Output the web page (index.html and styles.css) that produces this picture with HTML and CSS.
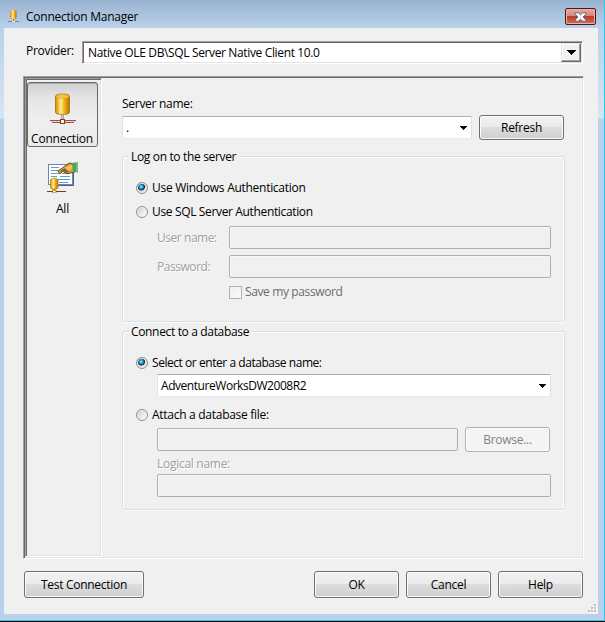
FILE: index.html
```html
<!DOCTYPE html>
<html lang="en">
<head>
<meta charset="utf-8">
<title>Connection Manager</title>
<link rel="stylesheet" href="styles.css">
</head>
<body>
<svg width="0" height="0" class="defs" aria-hidden="true">
  <defs>
    <linearGradient id="gold">
      <stop offset="0" stop-color="#c98a10"/><stop offset=".15" stop-color="#f0b020"/>
      <stop offset=".38" stop-color="#fff0a0"/><stop offset=".6" stop-color="#f8b81c"/><stop offset="1" stop-color="#b87300"/>
    </linearGradient>
    <symbol id="arrow" viewBox="0 0 9 5"><path d="M0 0H9V1H8V2H7V3H6V4H5V5H4V4H3V3H2V2H1V1H0Z" shape-rendering="crispEdges"/></symbol>
    <symbol id="small-arrow" viewBox="0 0 7 4"><path d="M0 0H7V1H6V2H5V3H4V4H3V3H2V2H1V1H0Z" shape-rendering="crispEdges"/></symbol>
  </defs>
</svg>
<div class="window">
  <header class="titlebar">
    <svg class="title-icon" width="12" height="14" viewBox="0 0 12 14">
      <rect x="2.5" y="1" width="6" height="9" rx="1.5" fill="url(#gold)"/>
      <path d="M5.5 10v2" stroke="#777"/><path d="M0 12.5h4M7 12.5h4" stroke="#c06a62"/><path d="M4.5 12.5h2" stroke="#fff"/>
    </svg>
    <h1>Connection Manager</h1>
    <button class="close" aria-label="Close">
      <svg width="13" height="10" viewBox="0 0 13 10"><path d="M1 .8h3.4l2.1 2 2.1-2H12v1.3L9 5l3 2.9v1.3H8.600l-2.100-2-2.100 2H1V7.900L4 5 1 2.100Z" fill="#f7f7f7" stroke="#59607a" stroke-width=".9"/></svg>
    </button>
  </header>
  <main class="client">
    <div class="provider">
      <label>Provider:</label>
      <div class="provider-combo"><span>Native OLE DB\SQL Server Native Client 10.0</span><i><svg width="9" height="5"><use href="#arrow"/></svg></i></div>
    </div>
    <div class="panel">
      <nav class="sidebar">
        <div class="tab selected">
          <svg width="28" height="32" viewBox="0 0 28 32">
            <path d="M6.500 3.500Q6.500 1 13.500 1T20.500 3.500V19Q20.500 21.500 13.500 21.500T6.500 19Z" fill="url(#gold)" stroke="#a66f0b" stroke-width=".8"/>
            <ellipse cx="13.500" cy="3.500" rx="6.300" ry="2" fill="#f7c338" stroke="#d6a02a" stroke-width=".5"/>
            <path d="M13.500 22v5" stroke="#666" stroke-width="2"/><path d="M13.500 22v5" stroke="#ddd" stroke-width=".8"/>
            <path d="M1 27.500h11M15 27.500h12M3 29.500h9M15 29.500h10" stroke="#a64c50"/><path d="M1 28.500h26" stroke="#e3c6c6" stroke-dasharray="2 1"/>
            <rect x="11.500" y="26.500" width="4" height="4" fill="#fff8b8" stroke="#7e3b2c"/>
          </svg>
          <span>Connection</span>
        </div>
        <div class="tab">
          <svg width="34" height="32" viewBox="0 0 34 32">
            <rect x="2.500" y="3.500" width="24" height="20" fill="#fff" stroke="#7182b5"/>
            <path d="M27.500 8v16.500H5" stroke="#555b80" fill="none"/>
            <path d="M5 6.500h8M5 9.500h8M5 12.500h8M14 15.500h10M16 12.500h8M12 18.500h12M5 15.500h6M13 21.500h9" stroke="#5a9dd0"/>
            <path d="M12 10l7-5 4-3 6 1v8l-5 1-3 1-4-3-3 3Z" fill="#d69b35" stroke="#6d512b"/>
            <path d="M18 7l7-3 3 2-5 4-4-2-3 2Z" fill="#f4c45b"/><path d="M14 10l5-3 4 4-3 1Z" fill="#8b6330"/>
            <path d="M26 2l6-1v11l-5-2Z" fill="#43a85d"/><path d="M31 1v11" stroke="#a7d8b0"/>
            <path d="M4.500 18.500Q8.500 15.500 12 18.500V27Q8.500 30 4.500 27Z" fill="url(#gold)" stroke="#bd8611" stroke-width=".8"/>
            <path d="M8.500 28v3" stroke="#666"/><path d="M1 30.500h6M10 30.500h10" stroke="#7b3b1d"/><rect x="6.500" y="29" width="3.500" height="3" fill="#fff1a0" stroke="#8a6827" stroke-width=".7"/>
          </svg>
          <span>All</span>
        </div>
      </nav>
      <section class="page">
        <label class="server-label">Server name:</label>
        <div class="row server">
          <div class="combo"><span>.</span><svg width="7" height="4"><use href="#small-arrow"/></svg></div>
          <button class="btn">Refresh</button>
        </div>
        <fieldset class="logon">
          <legend>Log on to the server</legend>
          <label class="radio"><i class="on"></i><span>Use Windows Authentication</span></label>
          <label class="radio"><i></i><span class="snug">Use SQL Server Authentication</span></label>
          <div class="credentials">
            <label class="off">User name:</label><div class="field"></div>
            <label class="off">Password:</label><div class="field"></div>
          </div>
          <label class="save"><i></i><span>Save my password</span></label>
        </fieldset>
        <fieldset class="database">
          <legend>Connect to a database</legend>
          <label class="radio"><i class="on"></i><span class="tight">Select or enter a database name:</span></label>
          <div class="combo"><span class="tight">AdventureWorksDW2008R2</span><svg width="7" height="4"><use href="#small-arrow"/></svg></div>
          <label class="radio attach"><i></i><span>Attach a database file:</span></label>
          <div class="row file"><div class="field"></div><button class="btn" disabled>Browse...</button></div>
          <label class="off logical">Logical name:</label>
          <div class="field"></div>
        </fieldset>
      </section>
    </div>
    <footer class="actions">
      <button class="btn test">Test Connection</button>
      <button class="btn">OK</button>
      <button class="btn">Cancel</button>
      <button class="btn">Help</button>
    </footer>
    <svg class="grip" width="9" height="9" viewBox="0 0 9 9" shape-rendering="crispEdges">
      <path d="M7 1h2v2H7zM4 4h2v2H4zM7 4h2v2H7zM1 7h2v2H1zM4 7h2v2H4zM7 7h2v2H7z" fill="#fff"/>
      <path d="M6 0h2v2H6zM3 3h2v2H3zM6 3h2v2H6zM0 6h2v2H0zM3 6h2v2H3zM6 6h2v2H6z" fill="#bdbdbd"/>
    </svg>
  </main>
</div>
</body>
</html>
```

FILE: styles.css
```css
* { box-sizing: border-box; }
body { margin: 0; background: #000; font: 12px/16px "Open Sans", "Noto Sans", sans-serif; letter-spacing: -.28px; color: #000; overflow: hidden; }
.defs { position: absolute; }
label, span, legend { white-space: nowrap; }
.snug { letter-spacing: -.35px; }
.tight { letter-spacing: -.45px; }
.window { width: 605px; height: 621px; padding: 0 6px 6px 4px; border: solid #27cbe9; border-width: 0 1px 1px 0; background: linear-gradient(#99b4d1, #b9d1ea 28px, #d0e0f0 95px, #d5e5f4 118px, #b9d1ea 119px); }
.titlebar { display: flex; height: 28px; padding: 8px 2px 0 8px; background: linear-gradient(#99b4d1, #b9d1ea); margin: 0 -6px 0 -4px; }
.title-icon { margin-top: 1px; }
h1 { flex: 1; margin: 1px 0 0 6px; font-size: 12px; line-height: 16px; font-weight: 400; letter-spacing: -.25px; }
.close { display: flex; align-items: center; justify-content: center; width: 31px; height: 17px; padding: 0; margin-right: 6px; border: 1px solid #4c1725; border-radius: 2px; background: linear-gradient(#e8aaa0, #d98275 48%, #bd3d25 50%, #cf6d58); box-shadow: inset 0 0 0 1px #e9b0a6; }
.client { height: 586px; padding: 13px 14px 0 19px; background: #f0f0f0; }
.provider { display: flex; height: 23px; padding-left: 3px; }
.provider > label { width: 56px; margin-top: 2px; }
.provider-combo { display: flex; width: 501px; height: 23px; border: 1px solid; border-color: #a0a0a0 #fff #fff #a0a0a0; background: #fff; box-shadow: inset 1px 1px #696969, inset -1px -1px #e3e3e3; align-items: center; padding: 1px 1px 1px 5px; letter-spacing: -.36px; }
.provider-combo span { flex: 1; }
.provider-combo i { display: flex; width: 20px; height: 19px; align-items: center; justify-content: center; background: #f0f0f0; border: 1px solid; border-color: #e3e3e3 #696969 #696969 #e3e3e3; box-shadow: inset -1px -1px #a0a0a0, inset 1px 1px #fff; }
.panel { display: flex; width: 561px; height: 483px; margin-top: 12px; border: 1px solid; border-color: #a0a0a0 #fff #fff #a0a0a0; box-shadow: inset 1px 1px #696969, inset -1px -1px #e3e3e3; padding: 1px; }
.sidebar { width: 78px; height: 479px; border: 1px solid; border-color: #a0a0a0 #fff #fff #a0a0a0; box-shadow: inset 1px 1px #696969, inset -1px -1px #e3e3e3; padding: 3px 0 0 1px; }
.tab { display: flex; flex-direction: column; align-items: center; width: 71px; height: 65px; padding-top: 10px; }
.tab span { margin-top: 8px; letter-spacing: -.2px; }
.tab svg { flex: none; }
.selected { border: 1px solid #686868; border-radius: 3px; background: linear-gradient(#d0d0d0, #e6e6e6 25%, #efefef 60%, #e9e9e9); box-shadow: inset 0 1px #aaa; }
.selected span { margin: 6px 1px 0 0; }
.tab + .tab { margin-top: 4px; }
.page { width: 481px; padding: 18px 17px 0 20px; }
.server-label { display: block; height: 20px; }
.row { display: flex; gap: 7px; }
.combo { display: flex; height: 23px; align-items: center; justify-content: space-between; padding: 0 4px 0 3px; background: #fff; border: 1px solid; border-color: #abadb3 #dbdfe6 #e3e9ef #e2e3ea; border-radius: 1px; }
.server .combo { width: 350px; }
.btn { width: 85px; height: 25px; flex: none; padding: 0; font: inherit; letter-spacing: inherit; color: #000; border: 1px solid #707070; border-radius: 3px; background: linear-gradient(#f2f2f2, #ebebeb 49%, #dddddd 50%, #cfcfcf); box-shadow: inset 0 0 0 1px #fbfbfb; }
.btn:disabled { color: #838383; border-color: #adb2b5; background: #f4f4f4; }
.server .btn { margin-top: -1px; }
fieldset { position: relative; display: flex; flex-direction: column; width: 443px; min-width: 0; margin: 0; border: 1px solid #d5dfe5; border-radius: 3px; box-shadow: inset 1px 1px #fff, inset -1px 0 #fff, 0 1px #fff; }
legend { position: absolute; top: -8px; left: 6px; padding: 0 2px; background: #f0f0f0; letter-spacing: -.34px; }
.logon { height: 166px; margin-top: 16px; padding: 23px 13px 0 13px; }
.database { height: 179px; margin-top: 9px; padding: 23px 13px 0 13px; }
.radio { display: flex; height: 16px; align-items: center; gap: 4px; }
.radio i { width: 12px; height: 12px; flex: none; border: 1px solid #8e8f8f; border-radius: 50%; background: linear-gradient(135deg, #c6c8ca, #f6f6f6 75%); box-shadow: inset 0 0 0 1px #f4f4f4; }
.radio i.on { background: radial-gradient(circle at 42% 38%, #b8e8fa 0, #35a6d5 1.5px, #0d4770 3px, #17364f 3.500px, #d9dcdd 4px); }
.logon .radio + .radio { margin-top: 8px; }
.credentials { display: grid; grid-template-columns: 72px 322px; row-gap: 6px; margin: 6px 0 0 21px; }
.credentials label { padding-top: 4px; letter-spacing: -.45px; }
.field { height: 23px; border: 1px solid #afafaf; border-radius: 2px; background: #f0f0f0; box-shadow: inset 1px 1px #f8f8f8; }
.off { color: #a0a0a0; text-shadow: 1px 1px #fff; }
.save { display: flex; margin: 6px 0 0 93px; gap: 3px; color: #6d6d6d; align-items: center; letter-spacing: -.38px; }
.save i { width: 13px; height: 13px; border: 1px solid #b1b1b1; background: linear-gradient(135deg, #eeeeee, #fafafa); }
.database > .combo { width: 394px; margin: 3px 0 0 21px; }
.attach { margin-top: 10px; }
.file { margin: 5px 0 0 21px; }
.file .field { width: 301px; }
.file .btn { margin-top: -1px; }
.logical { margin: 4px 0 1px 21px; height: 17px; }
.database > .field { width: 394px; margin-left: 21px; }
.actions { display: flex; gap: 7px; margin-top: 12px; padding-left: 1px; }
.actions .btn { height: 27px; }
.actions .test { width: 120px; margin-right: 163px; }
.grip { display: block; margin: 6px -13px 0 auto; }
```
